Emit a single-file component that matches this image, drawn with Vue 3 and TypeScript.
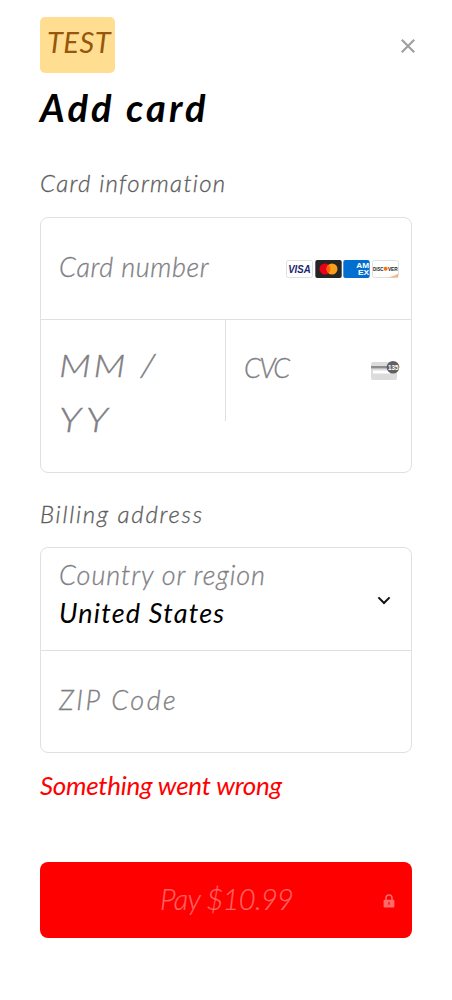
<script setup lang="ts">
interface TextLabels {
  title: string
  cardSection: string
  addressSection: string
  error: string
}

const labels: TextLabels = {
  title: 'Add card',
  cardSection: 'Card information',
  addressSection: 'Billing address',
  error: 'Something went wrong',
}
</script>

<template>
  <main class="sheet">
    <header class="top">
      <div class="badge"><span>TEST</span></div>
      <svg class="close" width="14" height="14" viewBox="0 0 14 14">
        <path d="M.8.8 13.2 13.2M13.2.8.8 13.2" stroke="#a0a0a0" stroke-width="2.2" fill="none" />
      </svg>
    </header>
    <h1 class="title">{{ labels.title }}</h1>

    <h2 class="section card-heading">{{ labels.cardSection }}</h2>
    <section class="box card-box">
      <div class="row number-row">
        <span class="hint number">Card number</span>
        <div class="brands">
          <svg width="27" height="18" viewBox="0 0 27 18">
            <rect x=".5" y=".5" width="26" height="17" rx="2" fill="#fff" stroke="#dfe0e3" />
            <text x="2.2" y="12.7" textLength="22.5" lengthAdjust="spacingAndGlyphs" class="visa">VISA</text>
          </svg>
          <svg width="27" height="18" viewBox="0 0 27 18">
            <rect x=".3" width="26.4" height="18" rx="2" fill="#252525" />
            <circle cx="10" cy="9" r="5.5" fill="#eb001b" />
            <circle cx="17" cy="9" r="5.5" fill="#f79e1b" />
            <path d="M13.5 4.8a5.5 5.5 0 0 1 0 8.4 5.5 5.5 0 0 1 0-8.4Z" fill="#ff5f00" />
          </svg>
          <svg width="27" height="18" viewBox="0 0 27 18">
            <rect x=".3" width="26.4" height="18" rx="2" fill="#016fd0" />
            <text x="13.3" y="8" textLength="12.8" lengthAdjust="spacingAndGlyphs" class="amex">AM</text>
            <text x="15" y="15.4" textLength="11.2" lengthAdjust="spacingAndGlyphs" class="amex">EX</text>
          </svg>
          <svg width="27" height="18" viewBox="0 0 27 18">
            <rect x=".5" y=".5" width="26" height="17" rx="2" fill="#fff" stroke="#dfe0e3" />
            <path d="M14 17.5Q22 16.5 26 13.5V17.5Z" fill="#f9b583" />
            <text x="1" y="10.9" textLength="10.5" lengthAdjust="spacingAndGlyphs" class="discover">DISC</text>
            <circle cx="13.6" cy="8.8" r="2" fill="#f47216" />
            <text x="15.9" y="10.9" textLength="9.8" lengthAdjust="spacingAndGlyphs" class="discover">VER</text>
          </svg>
        </div>
      </div>
      <div class="split">
        <div class="hint expiry">
          <span class="month">MM /</span>
          <span class="year">YY</span>
        </div>
        <div class="security">
          <span class="hint cvc">CVC</span>
          <svg width="29" height="20" viewBox="0 0 29 20">
            <rect y="2" width="26" height="18" rx="2" fill="#dcdcdc" />
            <path d="M0 6h20v2.4H0z" fill="#8d8d8d" />
            <path d="M2 10.5h18v3H2z" fill="#fff" />
            <circle cx="22" cy="7.2" r="6.3" fill="#606060" />
            <text x="17" y="9.8" textLength="10.6" lengthAdjust="spacingAndGlyphs" class="digits">135</text>
          </svg>
        </div>
      </div>
    </section>

    <h2 class="section address-heading">{{ labels.addressSection }}</h2>
    <section class="box address-box">
      <div class="row country-row">
        <div class="country">
          <span class="hint region">Country or region</span>
          <span class="value">United States</span>
        </div>
        <svg width="14" height="10" viewBox="0 0 14 10">
          <path d="M1.4 1.4 7 7l5.6-5.6" stroke="#101010" stroke-width="2" fill="none" />
        </svg>
      </div>
      <div class="row zip-row"><span class="hint zip">ZIP Code</span></div>
    </section>

    <p class="error">{{ labels.error }}</p>

    <button class="pay" type="button">
      <span class="amount">Pay $10.99</span>
      <svg class="lock" width="12" height="14" viewBox="0 0 12 14">
        <path d="M3 6V4a3 3 0 0 1 6 0v2" fill="none" stroke="#ff6b6b" stroke-width="1.6" />
        <rect x=".6" y="5.8" width="10.8" height="7.6" rx="1.2" fill="#ff6b6b" />
        <path d="M5.4 8.1h1.2v2.6H5.4z" fill="#f00" />
      </svg>
    </button>
  </main>
</template>

<style>
html,
body {
  background: #fff;
}
</style>

<style scoped>
.sheet {
  box-sizing: border-box;
  width: 452px;
  height: 1000px;
  padding: 17px 40px 0;
  overflow: hidden;
  font-family: Lato, "Open Sans", sans-serif;
  font-style: italic;
  font-weight: 300;
  color: #000;
  white-space: nowrap;
}
.top {
  display: flex;
  justify-content: space-between;
  height: 56px;
}
.badge {
  box-sizing: border-box;
  width: 75px;
  height: 56px;
  padding-left: 7px;
  border-radius: 5px;
  background: #ffde92;
  color: #96560c;
  font-size: 29px;
  font-weight: 400;
  line-height: 50px;
  letter-spacing: 0.5px;
}
.close {
  margin: 22px -3px 0 0;
}
.title {
  margin: 10px 0 0;
  height: 50px;
  font-size: 38px;
  font-weight: 700;
  line-height: 48px;
  letter-spacing: 3.1px;
}
.section {
  margin: 0;
  height: 36px;
  font-size: 24px;
  font-weight: 300;
  line-height: 36px;
  color: #5c5c5c;
  -webkit-text-stroke: 0.3px;
}
.card-heading {
  margin-top: 32px;
  letter-spacing: 1.3px;
}
.box {
  box-sizing: border-box;
  border: 1px solid #e0e0e0;
  border-radius: 8px;
}
.card-box {
  height: 256px;
  margin-top: 16px;
}
.row {
  box-sizing: border-box;
  display: flex;
  align-items: center;
  justify-content: space-between;
  padding-left: 18px;
}
.number-row {
  height: 102px;
  padding-right: 12.4px;
  border-bottom: 1px solid #e0e0e0;
}
.hint {
  font-size: 27px;
  color: #808084;
  line-height: 50px;
  -webkit-text-stroke: 0.3px;
}
.number {
  margin-top: -4px;
  letter-spacing: 0.6px;
}
.brands {
  display: flex;
  gap: 1.4px;
}
.brands svg {
  display: block;
}
.visa,
.amex,
.discover,
.digits {
  font-family: "Liberation Sans", Arial, sans-serif;
  font-weight: 700;
}
.visa {
  font-size: 10.5px;
  font-style: italic;
  fill: #1a1f71;
}
.amex {
  font-size: 6.4px;
  font-style: normal;
  fill: #fff;
}
.discover {
  font-size: 5.6px;
  font-style: normal;
  fill: #222;
}
.digits {
  font-size: 7.6px;
  font-style: normal;
  fill: #fff;
}
.split {
  display: flex;
  align-items: flex-start;
}
.expiry {
  box-sizing: border-box;
  display: flex;
  flex-direction: column;
  align-items: flex-start;
  width: 184px;
  padding: 19px 0 0 18px;
  line-height: 53px;
}
.month {
  font-size: 31px;
  letter-spacing: 2.2px;
  transform: scaleX(1.22);
  transform-origin: left;
}
.year {
  font-size: 34px;
  letter-spacing: 4px;
  transform: scaleX(1.18);
  transform-origin: left;
}
.security {
  box-sizing: border-box;
  display: flex;
  align-items: center;
  justify-content: space-between;
  flex: 1;
  height: 101px;
  padding: 0 11px 0 18px;
  border-left: 1px solid #e0e0e0;
}
.security svg {
  margin-top: -1px;
}
.cvc {
  margin-top: -6px;
  letter-spacing: -1.8px;
}
.address-heading {
  margin-top: 23px;
  letter-spacing: 1.75px;
}
.address-box {
  height: 206px;
  margin-top: 15px;
}
.country-row {
  height: 103px;
  padding-right: 20px;
  border-bottom: 1px solid #e0e0e0;
}
.country {
  display: flex;
  flex-direction: column;
  margin-top: -10px;
}
.region,
.value {
  line-height: 38px;
}
.region {
  letter-spacing: 0.95px;
}
.value {
  font-size: 27px;
  font-weight: 400;
  letter-spacing: 1.2px;
}
.country-row svg {
  margin-top: 4px;
}
.zip-row {
  height: 101px;
}
.zip {
  margin-top: -4px;
  letter-spacing: 2.5px;
}
.error {
  margin: 13px 0 0;
  height: 41px;
  font-size: 26px;
  font-weight: 400;
  line-height: 38px;
  letter-spacing: -0.28px;
  color: #f00;
}
.pay {
  box-sizing: border-box;
  display: flex;
  align-items: center;
  width: 372px;
  height: 76px;
  margin: 55px 0 0;
  padding: 0 17px 0 120px;
  border: 0;
  border-radius: 8px;
  background: #f00;
  color: #ff6565;
  font: inherit;
  font-size: 29px;
}
.amount {
  margin-top: -4px;
  letter-spacing: -0.65px;
  -webkit-text-stroke: 0.2px;
}
.lock {
  margin-left: auto;
  margin-top: 1px;
}
</style>
